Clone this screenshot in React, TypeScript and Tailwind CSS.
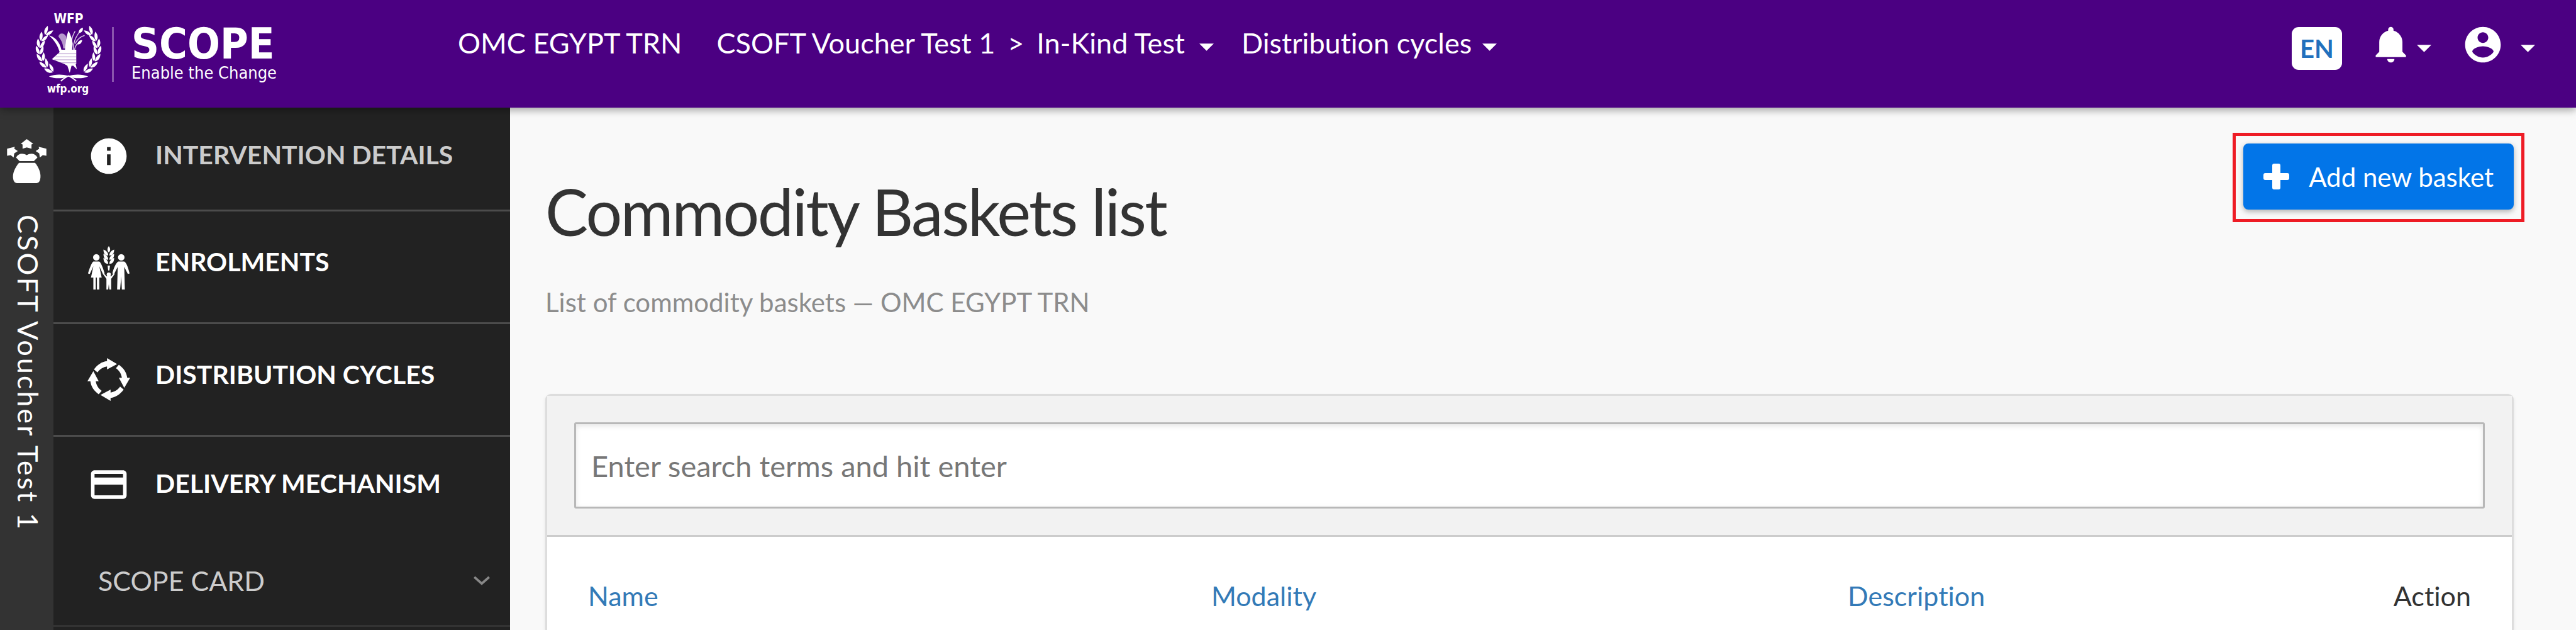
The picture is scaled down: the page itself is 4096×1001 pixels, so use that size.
import type { ReactNode } from 'react';

const asset = 'shrink-0 fill-current';

function Caret({ className = '' }: { className?: string }) {
  return (
    <svg viewBox="0 0 24 12" className={`h-[12px] w-[23px] ${asset} ${className}`} aria-hidden="true">
      <path d="M0 0h24L12 12z" />
    </svg>
  );
}

function Laurel() {
  // x, y and tilt of each pair of leaves, from the tip down to the base
  const leaves = [
    [19, 30, 35], [11, 40, 24], [7, 51, 10], [6, 62, -4], [9, 74, -18], [15, 85, -34], [24, 94, -48],
  ];
  return (
    <g>
      {leaves.map(([x, y, tilt]) => (
        <g key={y} transform={`translate(${x} ${y}) rotate(${tilt})`}>
          <path d="M0 6C-6 3-7-3-5-9-1-5 1 0 0 6z" />
          <path d="M1 6C0 0 3-5 7-8 8-1 6 4 1 6z" />
        </g>
      ))}
    </g>
  );
}

function Emblem() {
  return (
    <svg
      viewBox="0 0 110 136"
      className={`h-[129px] w-[104px] overflow-visible font-['DejaVu_Sans_Condensed','DejaVu_Sans',sans-serif] font-bold ${asset}`}
      aria-label="WFP wfp.org"
    >
      <text x="55" y="16" textAnchor="middle" fontSize="22">WFP</text>
      <g>
        <Laurel />
        <g transform="translate(110 0) scale(-1 1)">
          <Laurel />
        </g>
        <path d="M22 105c10-4 22-4 33-1 11-3 23-3 33 1-10 4-22 4-33 0-11 4-23 4-33 0z" />
        <path d="M42 113c3-4 8-6 13-9 5 3 10 5 13 9" fill="none" stroke="currentColor" strokeWidth="2" />
        <path d="M22 36c9 2 18 10 21 24h25v24h-1l2 9-6-6-3 0-3 12-4-12-5-3-21-8 13-12c-3-11-9-20-18-28z" />
        <path d="M46 58c0-9-4-15-8-20 1-7 10-7 13 0l-1 20z" opacity=".6" />
        <path d="M49 60c1-12 2-22 6-32 4 8 6 14 7 22l-1 10z" />
        <path d="M63 60c0-12 3-20 12-32M65 60c2-8 4-10 9-13M60 46c1-8 3-12 6-17M66 50c4-8 9-12 16-14" fill="none" stroke="currentColor" strokeWidth="1.5" opacity=".8" />
        <path d="M72 32c0-5 3-8 7-9 1 5-2 9-7 9zM70 51c1-5 4-7 8-7-1 5-4 8-8 7z" />
      </g>
      <path d="M37 67h31M33 72h35M31 77h37M36 82h32" stroke="#4b0082" strokeWidth="1" opacity=".45" />
      <text x="54" y="132" textAnchor="middle" fontSize="18">wfp.org</text>
    </svg>
  );
}

function Logo() {
  return (
    <a href="#home" className="flex w-[672px] shrink-0 items-start pl-[57px] text-white">
      <div className="mt-[22px]">
        <Emblem />
      </div>
      <div className="mt-[43px] ml-[17px] h-[87px] w-[3px] bg-[#8a55ad]" />
      <div className="mt-[40px] ml-[28px] font-['DejaVu_Sans_Condensed','DejaVu_Sans',sans-serif] whitespace-nowrap">
        <div className="text-[68px] leading-[60px] font-bold">SCOPE</div>
        <div className="text-[27px] leading-[32px]">Enable the Change</div>
      </div>
    </a>
  );
}

function NavBar() {
  return (
    <header className="relative z-10 flex h-[171px] bg-[#4b0082] text-white shadow-[0_4px_12px_rgba(0,0,0,0.35)]">
      <Logo />
      <nav className="flex items-start pt-[36px] pl-[56px] text-[45px] leading-[64px] whitespace-nowrap">
        <a href="#office">OMC EGYPT TRN</a>
        <button type="button" className="ml-[55px] flex items-center">
          <span>CSOFT Voucher Test 1</span>
          <span className="mx-[20px]">&gt;</span>
          <span>In-Kind Test</span>
          <Caret className="mt-[14px] ml-[23px]" />
        </button>
        <button type="button" className="ml-[44px] flex items-center">
          Distribution cycles
          <Caret className="mt-[14px] ml-[17px]" />
        </button>
      </nav>
      <div className="ml-auto flex items-start pr-[65px]">
        <button type="button" className="mt-[43px] h-[68px] w-[80px] rounded-[11px] bg-white text-[40px] leading-[60px] font-bold text-[#2170bd]">
          EN
        </button>
        <button type="button" aria-label="Notifications" className="mt-[37px] ml-[45px] flex items-center">
          <svg viewBox="0 0 24 24" className={`size-[68px] ${asset}`}>
            <path d="M11.5 22c1.1 0 2-.9 2-2h-4c0 1.1.9 2 2 2zm6.5-6v-5.5c0-3.07-2.13-5.64-5-6.32V3.5c0-.83-.67-1.5-1.5-1.5S10 2.67 10 3.5v.68c-2.87.68-5 3.25-5 6.32V16l-2 2v1h17v-1l-2-2z" />
          </svg>
          <Caret className="mt-[12px] ml-[6px]" />
        </button>
        <button type="button" aria-label="Account" className="mt-[37px] ml-[48px] flex items-center">
          <svg viewBox="0 0 24 24" className={`size-[68px] ${asset}`}>
            <path d="M12 2C6.48 2 2 6.48 2 12s4.48 10 10 10 10-4.48 10-10S17.52 2 12 2zm0 3c1.66 0 3 1.34 3 3s-1.34 3-3 3-3-1.34-3-3 1.34-3 3-3zm0 14.2c-2.5 0-4.71-1.28-6-3.22.03-1.99 4-3.08 6-3.08 1.99 0 5.97 1.09 6 3.08-1.29 1.94-3.5 3.22-6 3.22z" />
          </svg>
          <Caret className="mt-[12px] ml-[26px]" />
        </button>
      </div>
    </header>
  );
}

function SackIcon() {
  return (
    <svg viewBox="0 0 66 75" className={`h-[71px] w-[63px] ${asset}`} aria-hidden="true">
      <path d="M33 0l11 8-3 1v7l-8-2-7 2V9l-3-1z" />
      <path d="M0 16l13-3-1 3 6 4-6 4-1 7-5-4-6 1z" />
      <path d="M66 16l-13-3 1 3-6 4 6 4 1 7 5-4 6 1z" />
      <path d="M15 31c4-7 11-8 18-4 7-4 14-3 18 4l-6 6H21z" />
      <path d="M20 40h27c6 7 10 17 9 25-1 7-3 9-8 9H18c-5 0-7-2-8-9-1-8 4-18 10-25z" />
    </svg>
  );
}

function InfoIcon() {
  return (
    <svg viewBox="0 0 24 24" className={`size-[68px] ${asset}`} aria-hidden="true">
      <path d="M12 2C6.48 2 2 6.48 2 12s4.48 10 10 10 10-4.48 10-10S17.52 2 12 2zm1 15h-2v-6h2v6zm0-8h-2V7h2v2z" />
    </svg>
  );
}

function FamilyIcon() {
  return (
    <svg viewBox="0 0 72 84" className={`h-[80px] w-[68px] ${asset}`} aria-hidden="true">
      <circle cx="15" cy="26" r="5.5" />
      <path d="M10 33h10c3 2 7 13 9 20l-3 1-6-13 4 19h-4v20h-4V60h-2v20h-4V60H6l4-19L4 54l-3-1c2-7 6-18 9-20z" />
      <circle cx="57" cy="26" r="5.5" />
      <path d="M52 33h10c4 2 7 12 9 20l-3 1-6-12 1 38h-5l-1-22-2 22h-5l1-38-6 12-3-1c2-8 6-18 10-20z" />
      <circle cx="36" cy="55" r="3.5" />
      <path d="M27 52l5 6h8l5-6 1 2-6 8v18h-3l-1-9-1 9h-3V62l-6-8z" />
      <path d="M36 7c3 4 3 8 0 11-3-3-3-7 0-11z" />
      {[12, 19, 26].map((y) => (
        <g key={y} transform={`translate(0 ${y})`}>
          <path d="M35 11c-5 0-8-3-8-10 5 2 8 5 8 10z" />
          <path d="M37 11c5 0 8-3 8-10-5 2-8 5-8 10z" />
        </g>
      ))}
      <path d="M34 40h4l-1 8h-2z" />
    </svg>
  );
}

function CycleIcon() {
  return (
    <svg viewBox="0 0 72 84" className={`h-[80px] w-[68px] ${asset}`} aria-hidden="true">
      {[0, 90, 180, 270].map((angle) => (
        <g key={angle} transform={`rotate(${angle} 36 42)`}>
          <path d="M11 25C17 17 24 12 33 11V6l17 10-17 9v-5c-6 1-12 4-16 10z" />
        </g>
      ))}
    </svg>
  );
}

function CardIcon() {
  return (
    <svg viewBox="0 0 24 24" className={`size-[68px] ${asset}`} aria-hidden="true">
      <path d="M20 4H4c-1.11 0-1.99.89-1.99 2L2 18c0 1.11.89 2 2 2h16c1.11 0 2-.89 2-2V6c0-1.11-.89-2-2-2zm0 14H4v-6h16v6zm0-10H4V6h16v2z" />
    </svg>
  );
}

function MenuLink({ icon, label, className = '' }: { icon: ReactNode; label: string; className?: string }) {
  return (
    <a href="#menu" className={`flex items-start gap-[40px] pl-[54px] text-[41px] leading-[64px] font-bold whitespace-nowrap ${className}`}>
      <span className="text-white">{icon}</span>
      {label}
    </a>
  );
}

function Sidebar() {
  return (
    <aside className="flex shrink-0">
      <div className="flex w-[85px] flex-col items-center bg-[#333] pt-[50px] text-white">
        <SackIcon />
        <span className="mt-[49px] ml-[4px] text-[45px] leading-[48px] tracking-[3px] whitespace-nowrap [writing-mode:vertical-rl]">
          CSOFT Voucher Test 1
        </span>
      </div>
      <nav className="w-[726px] bg-[#222] text-white">
        <MenuLink icon={<InfoIcon />} label="INTERVENTION DETAILS" className="h-[165px] border-b-3 border-[#4c4c4c] pt-[43px] text-[#ccc]" />
        <MenuLink icon={<FamilyIcon />} label="ENROLMENTS" className="h-[179px] border-b-3 border-[#4c4c4c] pt-[48px]" />
        <MenuLink icon={<CycleIcon />} label="DISTRIBUTION CYCLES" className="h-[179px] border-b-3 border-[#4c4c4c] pt-[48px]" />
        <MenuLink icon={<CardIcon />} label="DELIVERY MECHANISM" className="h-[150px] pt-[42px]" />
        <button
          type="button"
          className="flex h-[152px] w-full items-center justify-between border-b-3 border-[#333] pt-[8px] pr-[32px] pl-[71px] text-[43px] leading-[64px] text-[#ccc]"
        >
          SCOPE CARD
          <svg viewBox="0 0 27 17" className="h-[16px] w-[26px]" fill="none" stroke="#888" strokeWidth="4" aria-hidden="true">
            <path d="M1 2l12.5 11L26 2" />
          </svg>
        </button>
      </nav>
    </aside>
  );
}

function BasketTable() {
  return (
    <section className="mt-[114px] flex grow flex-col rounded-t-[9px] border-3 border-b-0 border-[#ddd] bg-white shadow-[0_3px_6px_rgba(0,0,0,0.08)]">
      <div className="border-b-3 border-[#ccc] bg-[#f2f2f2] px-[43px] py-[42px]">
        <input
          type="search"
          aria-label="Search baskets"
          placeholder="Enter search terms and hit enter"
          className="block h-[137px] w-full rounded-[3px] border-3 border-[#b8b8b8] bg-white px-[24px] text-[47px] text-[#333] shadow-[inset_0_3px_9px_rgba(0,0,0,0.1)] placeholder:text-[#777]"
        />
      </div>
      <table className="w-full table-fixed text-left text-[43px] leading-[52px]">
        <thead>
          <tr className="[&>th]:pt-[68px] [&>th]:pb-[28px] [&>th]:font-normal">
            <th className="w-[33.8%] pl-[65px]"><a href="#name" className="text-[#337ab7]">Name</a></th>
            <th className="w-[32.4%]"><a href="#modality" className="text-[#337ab7]">Modality</a></th>
            <th className="w-[24%]"><a href="#description" className="text-[#337ab7]">Description</a></th>
            <th className="pr-[65px] text-right text-[#333]">Action</th>
          </tr>
        </thead>
      </table>
    </section>
  );
}

export default function App() {
  return (
    <div className="flex min-h-screen flex-col bg-[#f9f9f9] font-[Lato,sans-serif] [font-variant-ligatures:none]">
      <NavBar />
      <div className="flex grow">
        <Sidebar />
        <main className="flex min-w-0 grow flex-col pr-[99px] pl-[56px]">
          <div className="flex items-start justify-between">
            <div className="pt-[97px]">
              <h1 className="text-[102px] leading-[136px] tracking-tight text-[#333]">Commodity Baskets list</h1>
              <p className="mt-[44px] text-[42px] leading-[64px] text-[#8c8c8c]">List of commodity baskets — OMC EGYPT TRN</p>
            </div>
            <div className="-mr-[17px] mt-[40px] border-5 border-[#ee1c25] p-[12px] pb-[15px]">
              <button
                type="button"
                className="flex h-[105px] items-center gap-[31px] rounded-[8px] bg-[#0275e8] px-[32px] text-[42px] leading-[52px] text-white shadow-[0_3px_9px_rgba(0,0,0,0.3)]"
              >
                <svg viewBox="0 0 41 41" className={`size-[41px] ${asset}`} aria-hidden="true">
                  <path d="M17 0h7q3 0 3 3v12h11q3 0 3 3v5q0 3-3 3H27v12q0 3-3 3h-7q-3 0-3-3V26H3q-3 0-3-3v-5q0-3 3-3h11V3q0-3 3-3z" />
                </svg>
                Add new basket
              </button>
            </div>
          </div>
          <BasketTable />
        </main>
      </div>
    </div>
  );
}
